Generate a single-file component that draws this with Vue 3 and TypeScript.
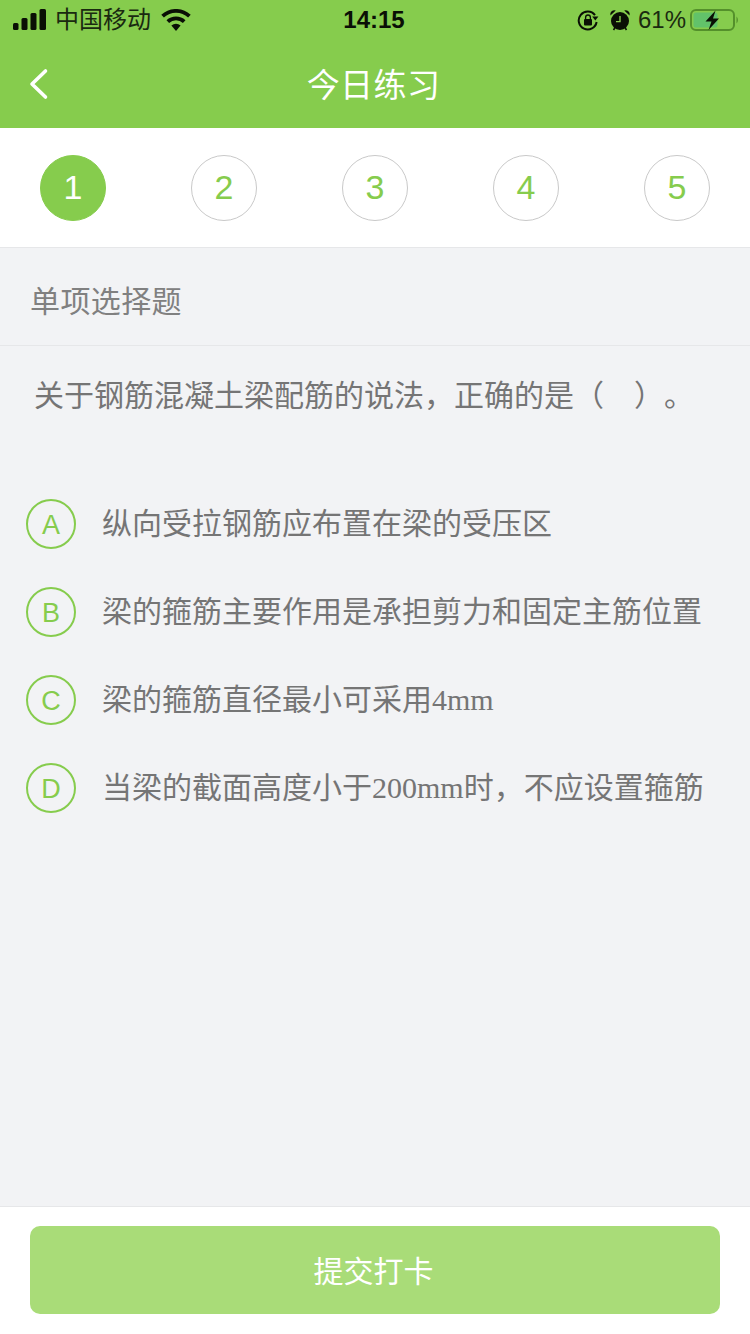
<script setup lang="ts">
const steps: number[] = [1, 2, 3, 4, 5]
interface Option { key: string; text: string }
const options: Option[] = [
  { key: 'A', text: '纵向受拉钢筋应布置在梁的受压区' },
  { key: 'B', text: '梁的箍筋主要作用是承担剪力和固定主筋位置' },
  { key: 'C', text: '梁的箍筋直径最小可采用4mm' },
  { key: 'D', text: '当梁的截面高度小于200mm时，不应设置箍筋' },
]
</script>

<template>
  <div class="page">
    <header class="head">
      <div class="status">
        <div class="status-left">
          <svg class="signal" width="34" height="22" viewBox="0 0 34 22">
            <rect x="0" y="14" width="5.5" height="7" rx="1.5" fill="#0a0f05" />
            <rect x="8.5" y="9" width="6" height="12" rx="1.5" fill="#0a0f05" />
            <rect x="17.5" y="4" width="6" height="17" rx="1.5" fill="#0a0f05" />
            <rect x="26.5" y="0" width="6.5" height="21" rx="1.5" fill="#0a0f05" />
          </svg>
          <span class="carrier">中国移动</span>
          <svg class="wifi" width="30" height="22" viewBox="0 0 30 22">
            <path d="M15 22 L10.4 16.4 A7 7 0 0 1 19.6 16.4 Z" fill="#0a0f05" />
            <path d="M6.8 12.6 A12 12 0 0 1 23.2 12.6" fill="none" stroke="#0a0f05" stroke-width="3.8" />
            <path d="M1.6 7.2 A19.5 19.5 0 0 1 28.4 7.2" fill="none" stroke="#0a0f05" stroke-width="3.8" />
          </svg>
        </div>
        <span class="time">14:15</span>
        <div class="status-right">
          <svg width="22" height="22" viewBox="0 0 22 22">
            <path d="M18 6.2 A9 9 0 1 0 19.6 13" fill="none" stroke="#0a0f05" stroke-width="2" />
            <path d="M15.2 7.4 L21.4 7.4 L18.3 11.4 Z" fill="#0a0f05" />
            <rect x="7" y="10" width="8" height="6.4" rx="1" fill="#0a0f05" />
            <path d="M8.6 10 V8.4 A2.4 2.4 0 0 1 13.4 8.4 V10" fill="none" stroke="#0a0f05" stroke-width="1.3" />
          </svg>
          <svg class="alarm" width="22" height="22" viewBox="0 0 22 22">
            <circle cx="11" cy="12" r="9" fill="#0a0f05" />
            <path d="M1.4 6.4 A4.2 4.2 0 0 1 6.8 1.4 Z M20.6 6.4 A4.2 4.2 0 0 0 15.2 1.4 Z" fill="#0a0f05" />
            <path d="M4.5 21 L6 18.6 M17.5 21 L16 18.6" stroke="#0a0f05" stroke-width="1.6" />
            <path d="M11 7 V12.6 H7" fill="none" stroke="#86cc4d" stroke-width="1.4" />
          </svg>
          <span class="pct">61%</span>
          <svg class="battery" width="50" height="24" viewBox="0 0 50 24">
            <rect x="1" y="2" width="43" height="20" rx="5" fill="none" stroke="#54902b" stroke-width="2" />
            <rect x="3.5" y="4.5" width="24" height="15" rx="2.5" fill="#62c26a" />
            <path d="M46.5 8.5 A5 5 0 0 1 46.5 15.5 Z" fill="#54902b" />
            <path d="M25.5 2.5 L15.5 13.5 H21.5 L18.5 22 L29 10.5 H23 Z" fill="#0a0f05" />
          </svg>
        </div>
      </div>
      <div class="nav">
        <svg class="back" width="24" height="36" viewBox="0 0 24 36">
          <path d="M18.5 5 L5 18 L18.5 31" fill="none" stroke="#fff" stroke-width="3.6" stroke-linecap="round" stroke-linejoin="round" />
        </svg>
        <h1 class="title">今日练习</h1>
      </div>
    </header>

    <nav class="steps">
      <div v-for="n in steps" :key="n" class="step" :class="{ active: n === 1 }">{{ n }}</div>
    </nav>

    <main class="body">
      <div class="type">单项选择题</div>
      <p class="question">关于钢筋混凝土梁配筋的说法，正确的是（<span class="blank"></span>）<span class="stop">。</span></p>
      <ul class="options">
        <li v-for="o in options" :key="o.key" class="option">
          <span class="badge">{{ o.key }}</span>
          <span class="text">{{ o.text }}</span>
        </li>
      </ul>
    </main>

    <footer class="foot">
      <button class="submit" type="button">提交打卡</button>
    </footer>
  </div>
</template>

<style>
html, body { margin: 0; padding: 0; }
</style>

<style scoped>
.page {
  width: 750px;
  height: 1334px;
  display: flex;
  flex-direction: column;
  background: #f2f3f5;
  font-family: "Liberation Sans", "Noto Sans CJK SC", sans-serif;
  overflow: hidden;
}
.head {
  height: 128px;
  background: #86cc4d;
  flex: none;
}
.status {
  height: 40px;
  padding: 0 10px;
  display: grid;
  grid-template-columns: 1fr auto 1fr;
  align-items: center;
  color: #0a0f05;
}
.status-left, .status-right { display: flex; align-items: center; }
.status-right { justify-content: flex-end; }
.signal { margin-left: 3px; }
.carrier { font-size: 24px; line-height: 30px; margin-left: 8px; color: #1a2a10; }
.wifi { margin-left: 10px; }
.time { font-size: 24px; font-weight: 700; margin-left: -2px; }
.alarm { margin-left: 10px; }
.pct { font-size: 24px; margin-left: 7px; color: #1a2a10; }
.battery { margin-left: 4px; }
.nav {
  height: 88px;
  padding-left: 27px;
  display: grid;
  grid-template-columns: 1fr auto 1fr;
  align-items: center;
}
.title {
  margin: -3px 0 0 -30px;
  font-size: 33px;
  font-weight: 400;
  color: #fff;
  letter-spacing: 0.4px;
}
.steps {
  flex: none;
  height: 119px;
  padding: 0 40px;
  display: flex;
  justify-content: space-between;
  align-items: center;
  background: #fff;
  border-bottom: 1px solid #e6e7e9;
}
.step {
  width: 66px;
  height: 66px;
  box-sizing: border-box;
  border: 1px solid #c9c9c9;
  border-radius: 50%;
  display: flex;
  align-items: center;
  justify-content: center;
  font-size: 34px;
  color: #86cc4d;
}
.step.active {
  background: #86cc4d;
  border-color: #86cc4d;
  color: #fff;
}
.body {
  flex: 1;
  min-height: 0;
}
.type {
  height: 98px;
  box-sizing: border-box;
  padding: 5px 0 0 30px;
  display: flex;
  align-items: center;
  font-size: 30px;
  letter-spacing: 0.4px;
  color: #808080;
  border-bottom: 1px solid #e6e7e9;
}
.question {
  margin: 30px 0 0;
  padding-left: 34px;
  font-size: 30px;
  line-height: 40px;
  color: #757575;
}
.blank {
  display: inline-block;
  width: 30px;
}
.stop {
  margin-left: 15px;
}
.options {
  list-style: none;
  margin: 83px 0 0;
  padding: 0 0 0 26px;
  display: flex;
  flex-direction: column;
  gap: 38px;
}
.option {
  display: flex;
  align-items: center;
  gap: 26px;
  height: 50px;
}
.badge {
  flex: none;
  width: 50px;
  height: 50px;
  box-sizing: border-box;
  padding-top: 2px;
  border: 2px solid #86cc4d;
  border-radius: 50%;
  display: flex;
  align-items: center;
  justify-content: center;
  font-size: 27px;
  color: #86cc4d;
}
.text {
  font-family: "Liberation Serif", "Noto Sans CJK SC", serif;
  font-size: 30px;
  line-height: 40px;
  color: #757575;
}
.foot {
  flex: none;
  height: 128px;
  box-sizing: border-box;
  padding: 19px 30px 0;
  background: #fff;
  border-top: 1px solid #e6e7e9;
}
.submit {
  display: block;
  width: 100%;
  height: 88px;
  box-sizing: border-box;
  border: 0;
  border-radius: 10px;
  background: #a9dc78;
  color: #fff;
  font-family: "Liberation Sans", "Noto Sans CJK SC", sans-serif;
  font-size: 30px;
  padding: 0 3px 3px 0;
}
</style>
